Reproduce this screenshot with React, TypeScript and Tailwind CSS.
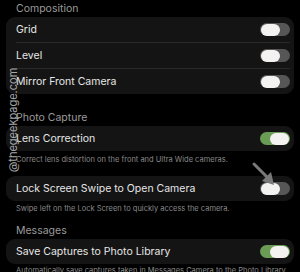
import React from "react";

interface ToggleProps {
    on?: boolean;
}

const Toggle: React.FC<ToggleProps> = ({ on }) => {
    return (
        <div
            className={
                on
                    ? "flex h-[13px] w-[30px] items-center justify-end rounded-full bg-[#6b9c55] pr-[1px]"
                    : "flex h-[13px] w-[30px] items-center justify-start rounded-full bg-[#565656] pl-[1px]"
            }
        >
            <div className="h-[12px] w-[19px] rounded-full bg-[#f4f1f1]" />
        </div>
    );
};

const Row: React.FC<{ label: string; on?: boolean }> = ({ label, on }) => {
    return (
        <div className="flex h-[25px] items-center justify-between pl-[10px]">
            <span className="text-[10.5px] text-[#e6e6e6]">{label}</span>
            <Toggle on={on} />
        </div>
    );
};

const Header: React.FC<{ title: string; className?: string }> = ({ title, className }) => (
    <div className={"pl-[16px] text-[10.5px] leading-[14px] text-[#9b9b9b] " + (className ?? "")}>
        {title}
    </div>
);

const Desc: React.FC<{ text: string; className?: string }> = ({ text, className }) => (
    <div className={"truncate pl-[16px] text-[7.5px] leading-[10px] text-[#8a8a8a] " + (className ?? "")}>
        {text}
    </div>
);

export default function App() {
    return (
        <div
            className="relative h-[272px] w-[300px] overflow-hidden bg-black"
            style={{ fontFamily: '"Inter", "Liberation Sans", sans-serif' }}
        >
            <div className="flex flex-col pt-[2px]">
                <Header title="Composition" />
                <div className="mx-[6px] mt-[1px] rounded-[9px] bg-[#141414] pr-[4px]">
                    <Row label="Grid" />
                    <div className="ml-[10px] h-px bg-[#2a2a2a]" />
                    <Row label="Level" />
                    <div className="ml-[10px] h-px bg-[#2a2a2a]" />
                    <Row label="Mirror Front Camera" />
                </div>

                <Header title="Photo Capture" className="mt-[17px]" />
                <div className="mx-[6px] mt-[1px] rounded-[9px] bg-[#141414] pr-[4px]">
                    <Row label="Lens Correction" on />
                </div>
                <Desc text="Correct lens distortion on the front and Ultra Wide cameras." className="mt-[4px]" />

                <div className="mx-[6px] mt-[11px] rounded-[9px] bg-[#141414] pr-[4px]">
                    <Row label="Lock Screen Swipe to Open Camera" />
                </div>
                <Desc text="Swipe left on the Lock Screen to quickly access the camera." className="mt-[3px]" />

                <Header title="Messages" className="mt-[10px]" />
                <div className="mx-[6px] mt-[1px] rounded-[9px] bg-[#141414] pr-[4px]">
                    <Row label="Save Captures to Photo Library" on />
                </div>
                <Desc
                    text="Automatically save captures taken in Messages Camera to the Photo Library."
                    className="mt-[2px]"
                />
            </div>

            {/* watermark */}
            <div className="absolute left-[-42px] top-[113px] w-[110px] -rotate-90 text-center text-[11px] leading-[14px] text-[#a8a8a8]">
                @thegeekpage.com
            </div>

            {/* arrow */}
            <svg className="absolute left-[250px] top-[160px]" width="30" height="30" viewBox="0 0 30 30">
                <line x1="4" y1="4" x2="18" y2="18" stroke="#7a7a7a" strokeWidth="3" strokeLinecap="round" />
                <polygon points="24,25 12,21 21,12" fill="#7a7a7a" />
            </svg>
        </div>
    );
}
